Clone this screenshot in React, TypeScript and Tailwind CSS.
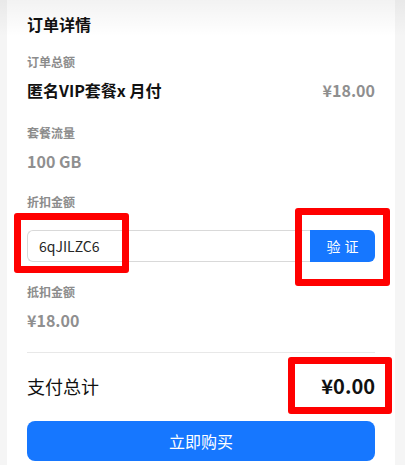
import React from "react";

const font = { fontFamily: '"Noto Sans CJK SC", "Noto Sans", sans-serif' };

function Label({ children, className = "" }: { children: React.ReactNode; className?: string }) {
  return (
    <div className={`text-[12px] leading-[20px] font-semibold text-[#8c8c8c] ${className}`}>{children}</div>
  );
}

export default function App() {
  return (
    <div className="relative h-[465px] w-[405px] overflow-hidden bg-[#f5f5f5]" style={font}>
      <div className="ml-[7px] w-[388px] bg-white px-[20px] pt-[12px] pb-[20px]">
        <div className="text-[16px] leading-[24px] font-semibold text-[#111]">订单详情</div>

        <Label className="mt-[16px]">订单总额</Label>
        <div className="mt-[6px] flex items-center justify-between">
          <span className="text-[16px] leading-[24px] font-bold text-[#111]">匿名VIP套餐x 月付</span>
          <span className="text-[16px] leading-[24px] font-bold text-[#8f8f8f]">¥18.00</span>
        </div>

        <Label className="mt-[21px]">套餐流量</Label>
        <div className="mt-[6px] text-[16px] leading-[24px] font-bold text-[#8f8f8f]">100 GB</div>

        <Label className="mt-[19px]">折扣金额</Label>
        <div className="mt-[18px] flex h-[32px]">
          <div className="flex flex-1 items-center rounded-l-[6px] border border-r-0 border-[#d9d9d9] pl-[11px] text-[14px] text-[#262626]">
            6qJILZC6
          </div>
          <button className="flex w-[65px] items-center justify-center rounded-r-[6px] bg-[#1677ff] text-[14px] tracking-[4px] text-white pl-[4px]">
            验证
          </button>
        </div>

        <Label className="mt-[20px]">抵扣金额</Label>
        <div className="mt-[6px] text-[16px] leading-[24px] font-bold text-[#8f8f8f]">¥18.00</div>

        <div className="mt-[20px] h-px bg-[#e8e8e8]" />

        <div className="mt-[19px] flex items-center justify-between">
          <span className="text-[18px] leading-[28px] text-[#111]">支付总计</span>
          <span className="text-[20px] leading-[28px] font-bold text-[#111]">¥0.00</span>
        </div>

        <button className="mt-[21px] flex h-[40px] w-full items-center justify-center rounded-[8px] bg-[#1677ff] text-[16px] text-white">
          立即购买
        </button>
      </div>

      <div className="pointer-events-none absolute left-0 top-0 h-[36px] w-full bg-gradient-to-b from-[rgba(0,0,0,0.05)] to-transparent" />

      <div className="pointer-events-none absolute left-[14px] top-[213px] h-[60px] w-[115px] rounded-[3px] border-[7px] border-[#ff0000]" />
      <div className="pointer-events-none absolute left-[295px] top-[208px] h-[78px] w-[95px] rounded-[3px] border-[7px] border-[#ff0000]" />
      <div className="pointer-events-none absolute left-[288px] top-[357px] h-[57px] w-[104px] rounded-[3px] border-[7px] border-[#ff0000]" />
    </div>
  );
}
